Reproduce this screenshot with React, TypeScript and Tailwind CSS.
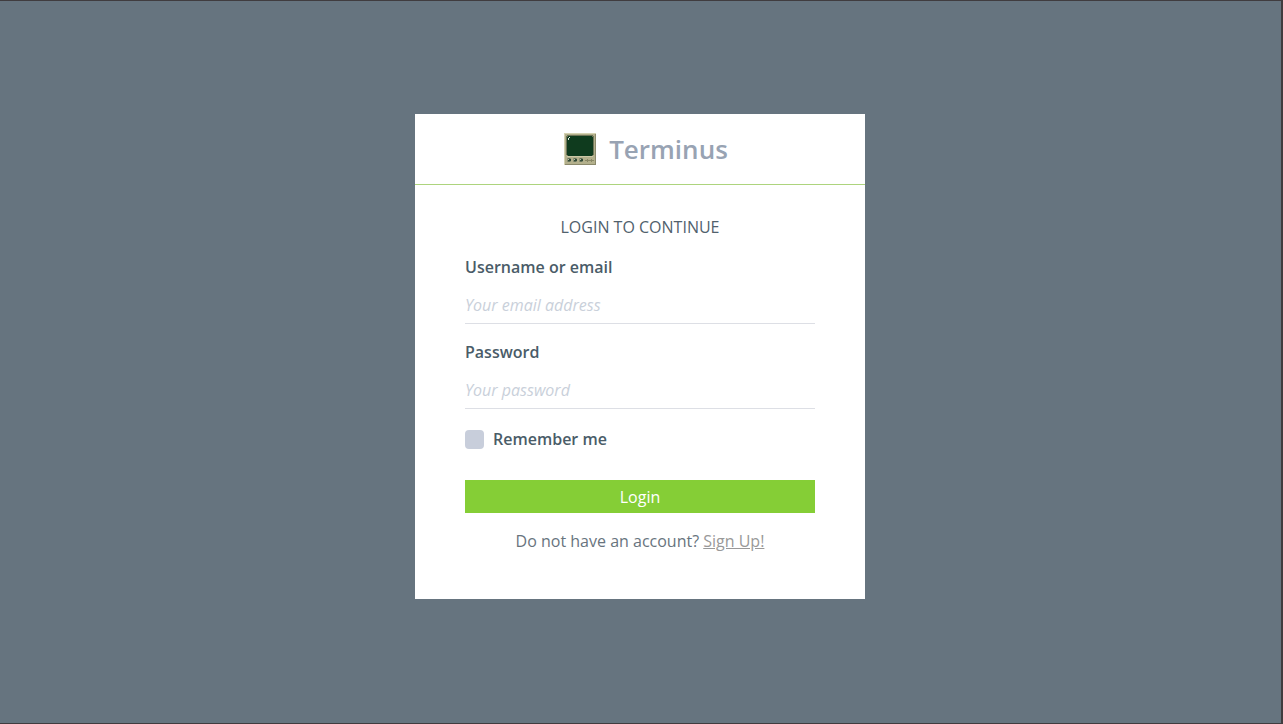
function TerminalLogo() {
  return (
    <svg width="32" height="32" viewBox="0 0 32 32" shapeRendering="crispEdges" aria-hidden="true">
      <rect width="32" height="32" fill="#b3b08c" />
      <path d="M0 0H32V1H1V32H0Z" fill="#d5d2b2" />
      <path d="M31 1H32V32H1V31H31Z" fill="#8b896b" />
      <path d="M3 2H29V3H30V22H29V23H3V22H2V3H3Z" fill="#6e7558" />
      <path d="M4 3H28V4H29V22H28V23H4V22H3V4H4Z" fill="#0f3b1e" />
      <path d="M3 23H29V24H3Z" fill="#cbc8a7" />
      <path d="M5 4H6V5H5V7H4V5H5Z" fill="#e7eee5" />
      {[5, 11, 17].map((x) => (
        <g key={x}>
          <rect x={x - 2} y="25" width="4" height="4" fill="#8d9276" />
          <rect x={x - 1} y="25" width="2" height="4" fill="#66735a" />
          <rect x={x - 1} y="26" width="3" height="2" fill="#324a37" />
          <rect x={x - 1} y="26" width="1" height="1" fill="#b9c0a4" />
        </g>
      ))}
      <path d="M21 27H30V28H21ZM23 26H24V29H23ZM27 26H28V29H27Z" fill="#888765" />
    </svg>
  );
}

type FieldProps = { id: string; label: string; type: string; placeholder: string };

function Field({ id, label, type, placeholder }: FieldProps) {
  return (
    <div className="mb-4 flex flex-col">
      <label htmlFor={id} className="font-semibold leading-6 text-[#4a5c68]">
        {label}
      </label>
      <input
        id={id}
        type={type}
        placeholder={placeholder}
        className="mt-2 h-[37px] w-full border-b border-[#dddfe5] bg-transparent text-[#4a5c68] outline-none placeholder:italic placeholder:text-[#c9d0da] focus:border-[#85ce36]"
      />
    </div>
  );
}

export default function App() {
  return (
    <main className="flex min-h-screen items-center justify-center border-y border-r-2 border-[#403c3f] bg-[#66747f] pr-px pb-[11px] font-['Open_Sans',sans-serif] text-base">
      <section className="w-full max-w-[450px] bg-white">
        <header className="flex h-[71px] items-center justify-center gap-[13px] border-b border-[#add47d] pl-3">
          <TerminalLogo />
          <h1 className="text-[26px] leading-9 font-semibold text-[#98a3b3]">Terminus</h1>
        </header>
        <form className="px-[50px] pt-[30px] pb-[46px]" onSubmit={(e) => e.preventDefault()}>
          <h2 className="mb-4 text-center leading-6 text-[#51616d]">LOGIN TO CONTINUE</h2>
          <Field id="username" label="Username or email" type="text" placeholder="Your email address" />
          <Field id="password" label="Password" type="password" placeholder="Your password" />
          <div className="mt-[18px] flex items-center gap-[9px]">
            <input
              id="remember"
              type="checkbox"
              className="size-[19px] appearance-none rounded bg-[#c8cedb] checked:bg-[#85ce36]"
            />
            <label htmlFor="remember" className="leading-6 font-semibold text-[#4a5c68]">
              Remember me
            </label>
          </div>
          <button type="submit" className="mt-[29px] block h-[33px] w-full bg-[#85ce36] leading-6 text-white">
            Login
          </button>
          <p className="mt-4 text-center leading-6 text-[#68747e]">
            Do not have an account?{" "}
            <a href="#signup" className="text-[#999999] underline">
              Sign Up!
            </a>
          </p>
        </form>
      </section>
    </main>
  );
}
